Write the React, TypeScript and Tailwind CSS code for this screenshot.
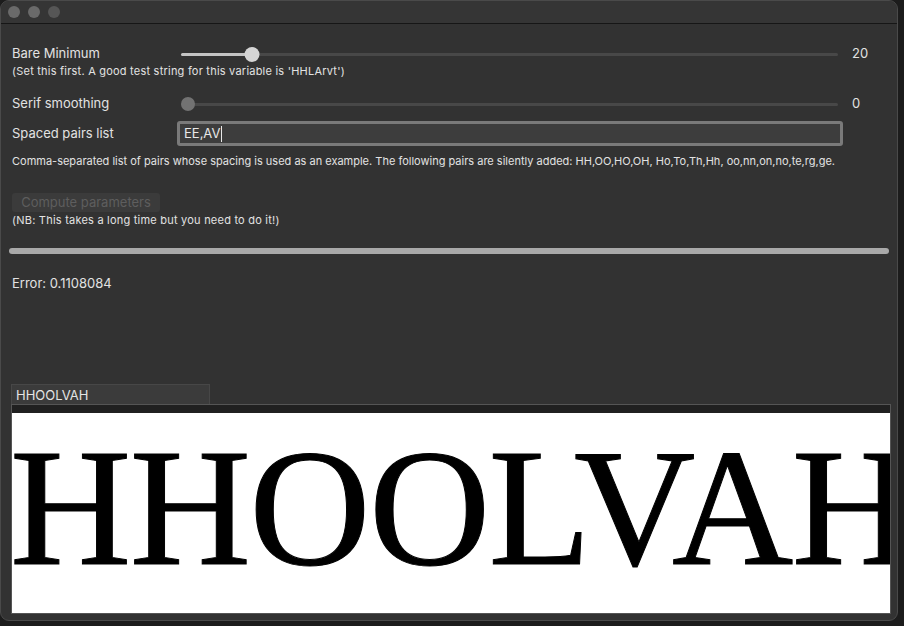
const ui = { fontFamily: 'Inter, "Liberation Sans", sans-serif' };

function Slider({ pct, filled }: { pct: number; filled: boolean }) {
  return (
    <div className="relative flex-1 h-[16px] flex items-center">
      <div className="w-full h-[3px] rounded-full bg-[#484848]" />
      {filled && (
        <div className="absolute left-0 h-[3px] rounded-full bg-[#c4c4c4]" style={{ width: `${pct}%` }} />
      )}
      <div
        className={
          filled
            ? 'absolute w-[15px] h-[15px] rounded-full bg-[#d5d5d5] -translate-x-1/2'
            : 'absolute w-[14px] h-[14px] rounded-full bg-[#727272] -translate-x-1/2'
        }
        style={{ left: `calc(${pct}% + ${filled ? 0 : 7}px)` }}
      />
    </div>
  );
}

export default function App() {
  return (
    <div className="w-[904px] h-[626px] bg-[#1c1c1c] overflow-hidden" style={ui}>
      <div className="w-[898px] h-[621px] bg-[#323232] rounded-[9px] border border-[#4a4a4a] flex flex-col overflow-hidden text-[#e2e2e2]">
        <div className="h-[23px] shrink-0 flex items-center gap-[8px] pl-[7px] bg-[#353535] border-b border-[#161616]">
          <div className="w-[12px] h-[12px] rounded-full bg-[#6a6a6a]" />
          <div className="w-[12px] h-[12px] rounded-full bg-[#6a6a6a]" />
          <div className="w-[12px] h-[12px] rounded-full bg-[#565656]" />
        </div>

        <div className="flex flex-col px-[11px]">
          <div className="mt-[22px] flex items-center h-[16px] text-[13px]">
            <div className="w-[169px]">Bare Minimum</div>
            <Slider pct={10.8} filled />
            <div className="w-[48px] pl-[14px]">20</div>
          </div>
          <div className="mt-[2px] h-[14px] leading-[14px] text-[11px] tracking-[0.02em]">
            (Set this first. A good test string for this variable is 'HHLArvt')
          </div>

          <div className="mt-[18px] flex items-center h-[16px] text-[13px]">
            <div className="w-[169px]">Serif smoothing</div>
            <Slider pct={0} filled={false} />
            <div className="w-[48px] pl-[14px]">0</div>
          </div>

          <div className="mt-[9px] flex items-center text-[13px]">
            <div className="w-[165px]">Spaced pairs list</div>
            <div className="w-[666px] h-[25px] rounded-[3px] border-[3px] border-[#7a7a7a] bg-[#3d3d3d] flex items-center pl-[4px] text-[#e8e8e8]">
              EE,AV
              <span className="inline-block w-px h-[16px] bg-[#e8e8e8] ml-px" />
            </div>
          </div>
          <div className="mt-[8px] h-[14px] leading-[14px] text-[11px] whitespace-nowrap">
            Comma-separated list of pairs whose spacing is used as an example. The following pairs are silently added: HH,OO,HO,OH, Ho,To,Th,Hh, oo,nn,on,no,te,rg,ge.
          </div>

          <div className="mt-[25px] w-[148px] h-[19px] rounded-[3px] bg-[#3b3b3b] text-[#5e5e5e] text-[13px] flex items-center justify-center">
            Compute parameters
          </div>
          <div className="mt-[1px] h-[14px] leading-[14px] text-[11px] tracking-[0.02em]">
            (NB: This takes a long time but you need to do it!)
          </div>

          <div className="mt-[21px] -mx-[3px] h-[6px] rounded-full bg-[#a9a9a9]" />

          <div className="mt-[21px] h-[16px] leading-[16px] text-[13px]">Error: 0.1108084</div>

          <div className="mt-[93px] -ml-px w-[199px] h-[20px] bg-[#3b3b3b] border border-[#474747] border-b-0 text-[13px] leading-[21px] pl-[4px] text-[#e4e4e4]">
            HHOOLVAH
          </div>
          <div className="-ml-px w-[880px] h-[210px] border border-[#555555] bg-[#202020] flex flex-col">
            <div className="h-[8px] shrink-0" />
            <div className="flex-1 bg-white overflow-hidden pt-[10px]">
              <div
                className="text-black text-[168px] leading-none whitespace-nowrap tracking-[-0.01em] -ml-[2px] [-webkit-text-stroke:1px_#000]"
                style={{ fontFamily: '"Liberation Serif", "DejaVu Serif", serif' }}
              >
                HHOOLVAH
              </div>
            </div>
          </div>
        </div>
      </div>
    </div>
  );
}
